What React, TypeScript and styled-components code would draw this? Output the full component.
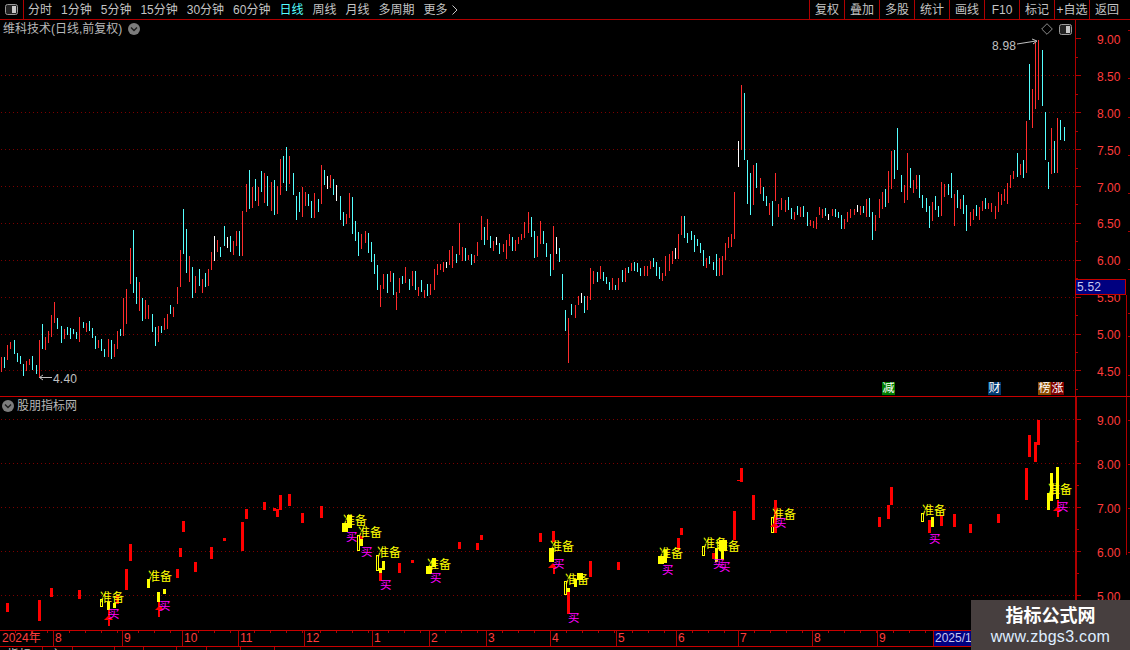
import React from "react";
import styled, { createGlobalStyle } from "styled-components";

const RED_LINE = "#b00000";
const GRID = "#7c0000";
const AXIS_TEXT = "#ff3c3c";
const FONT = `"Liberation Sans", "Noto Sans CJK SC", sans-serif`;

const Global = createGlobalStyle`
  html, body { margin: 0; padding: 0; background: #000; overflow: hidden; }
  #root { width: 1130px; height: 650px; }
`;

const Screen = styled.div`
  position: relative;
  width: 1130px;
  height: 650px;
  overflow: hidden;
  display: flex;
  flex-direction: column;
  background: #000;
  color: #c4c4c4;
  font: 12px/14px ${FONT};
`;

const Toolbar = styled.div`
  flex: none;
  height: 19px;
  display: flex;
  align-items: stretch;
  border-bottom: 1px solid ${RED_LINE};
`;

const ToggleCell = styled.div`
  width: 23px;
  display: flex;
  align-items: center;
  justify-content: center;
  border-right: 1px solid ${RED_LINE};
`;

const PeriodList = styled.div`
  display: flex;
  align-items: center;
  gap: 9px;
  padding: 1px 0 0 4px;
`;

const Period = styled.span<{ $active?: boolean }>`
  color: ${(p) => (p.$active ? "#54ffff" : "#c4c4c4")};
  white-space: nowrap;
  display: inline-flex;
  align-items: center;
  gap: 4px;
`;

const ActionList = styled.div`
  margin-left: auto;
  display: flex;
  padding-right: 6px;
`;

const Action = styled.div`
  width: 34px;
  padding-top: 1px;
  border-left: 1px solid ${RED_LINE};
  display: flex;
  align-items: center;
  justify-content: center;
  white-space: nowrap;
`;

const Pane = styled.section<{ $height: number; $ruled?: boolean }>`
  flex: none;
  position: relative;
  height: ${(p) => p.$height}px;
  display: flex;
  ${(p) => (p.$ruled ? `border-bottom: 1px solid #c80000;` : "")}
`;

const Plot = styled.svg`
  display: block;
  flex: none;
  width: 1075px;
  height: 100%;
`;

const AxisColumn = styled.svg<{ $rule: number }>`
  display: block;
  flex: 1;
  min-width: 0;
  height: 100%;
  box-sizing: border-box;
  border-left: ${(p) => p.$rule}px solid ${RED_LINE};
`;

const PaneTitle = styled.div<{ $left: number; $top: number; $gap: number }>`
  position: absolute;
  left: ${(p) => p.$left}px;
  top: ${(p) => p.$top}px;
  display: flex;
  align-items: center;
  gap: ${(p) => p.$gap}px;
  color: #b8b8b8;
  white-space: nowrap;
`;

const CornerTools = styled.div`
  position: absolute;
  left: 1041px;
  top: 3px;
  display: flex;
  align-items: center;
  gap: 6px;
`;

const PriceTag = styled.div`
  position: absolute;
  left: 1075px;
  top: 259px;
  width: 51px;
  height: 16px;
  box-sizing: border-box;
  padding-left: 1px;
  background: #000080;
  border: 1px solid #c80000;
  color: #c8c8f0;
  font-size: 12px;
  line-height: 14px;
  letter-spacing: 0.2px;
`;

const BadgeRow = styled.div`
  position: absolute;
  left: 882px;
  top: 362px;
  display: flex;
`;

const Badge = styled.span<{ $bg: string; $gap?: number }>`
  width: 13px;
  height: 13px;
  margin-left: ${(p) => p.$gap ?? 0}px;
  background: ${(p) => p.$bg};
  color: #fff;
  font-size: 12px;
  line-height: 13px;
  text-align: center;
  overflow: hidden;
`;

const TimeAxis = styled.div`
  flex: none;
  height: 15px;
  display: flex;
  border-top: 1px solid #c80000;
  border-bottom: 1px solid #c80000;
  color: ${AXIS_TEXT};
`;

const TimeCell = styled.div<{ $w: number; $first?: boolean; $cursor?: boolean }>`
  flex: none;
  width: ${(p) => p.$w}px;
  box-sizing: border-box;
  padding-left: ${(p) => (p.$first ? 2 : 1)}px;
  border-left: ${(p) => (p.$first ? "none" : `1px solid ${RED_LINE}`)};
  line-height: 15px;
  white-space: nowrap;
  background: ${(p) =>
    p.$cursor
      ? "#000080"
      : `repeating-linear-gradient(90deg, transparent 0 15px, ${RED_LINE} 15px 16px) top left / 100% 2px no-repeat`};
  color: ${(p) => (p.$cursor ? "#c8c8f0" : AXIS_TEXT)};
`;

const TabStrip = styled.div`
  flex: none;
  height: 4px;
  display: flex;
  overflow: hidden;
`;

const Tab = styled.div<{ $w: number }>`
  flex: none;
  width: ${(p) => p.$w}px;
  box-sizing: border-box;
  border-right: 1px solid ${RED_LINE};
  padding: 1px 0 0 7px;
  color: #c4c4c4;
  line-height: 14px;
`;

const Watermark = styled.div`
  position: absolute;
  left: 971px;
  top: 600px;
  width: 159px;
  height: 50px;
  background: #473f3f;
  display: flex;
  flex-direction: column;
  align-items: center;
  padding-top: 4px;
  box-sizing: border-box;
`;

const WatermarkTitle = styled.div`
  color: #fff;
  font-size: 18px;
  font-weight: 700;
  line-height: 24px;
`;

const WatermarkUrl = styled.div`
  color: #dfeeff;
  font-size: 16px;
  line-height: 18px;
  letter-spacing: 0.3px;
`;

const COLORS: Record<string, string> = { R: "#ff2c2c", C: "#54ffff", W: "#ffffff" };

type Section = { ox: number; oy: number; data: string };

const CANDLES: Section[] = [
  {
    ox: 0,
    oy: 130,
    data: "4,682,725,R 13,682,713,C 22,645,690,R 31,636,657,R 43,630,672,C 52,670,696,C 61,678,702,C 70,702,738,C 79,693,723,R 88,687,705,R 97,678,720,C 109,705,732,C 118,630,745,R 127,582,657,C 136,621,660,R 145,603,639,R 154,555,621,R 163,516,579,R 172,564,597,C 184,588,639,C 193,597,627,R 202,591,615,C 211,594,627,C 220,597,612,C 229,606,627,C 238,561,636,R 250,576,594,C 259,579,606,R 268,573,603,C 277,594,624,C 286,618,657,C 295,630,654,R 304,627,663,C 313,657,681,C 325,627,681,R 334,630,687,C 343,642,681,R 352,603,657,R 361,597,618,C 370,504,618,R 379,477,582,R 391,354,462,R 400,300,489,C 409,441,522,C 418,456,543,R 427,504,573,C 436,510,567,R 445,525,567,R 457,552,606,C 466,591,648,C 475,588,636,R 484,588,610,C 493,564,600,R 502,552,597,R 511,525,552,C 520,531,561,R 532,471,522,R 541,360,471,R 550,237,372,C 559,297,429,C 568,378,456,R 577,411,504,C 586,438,489,R 598,417,468,C 607,447,489,R 616,429,471,C 625,417,468,R 634,366,420,R 643,318,393,W 652,330,366,R 661,351,381,C 673,288,348,C 682,321,354,W 691,318,366,C 700,333,375,R 709,303,348,R 718,303,378,C 727,243,378,R 739,162,246,R 748,120,237,C 757,171,234,R 766,147,213,C 775,171,228,R 784,123,186,C 793,129,219,R 802,138,228,C 814,156,243,R 823,150,255,C 832,168,252,R 841,87,195,R 850,78,159,C 859,51,183,C 868,78,162,R 880,129,195,C 889,198,270,C 898,186,246,C",
  },
  {
    ox: 300,
    oy: 130,
    data: "7,171,261,R 16,186,228,R 25,192,228,C 34,213,264,C 43,189,264,R 55,207,246,C 64,105,222,R 73,120,165,C 82,138,177,W 91,135,174,R 100,147,195,C 109,165,213,W 121,198,270,C 130,246,288,C 139,252,282,R 148,189,264,R 157,201,312,C 166,273,333,C 175,306,378,C 184,312,357,R 196,303,339,R 205,309,369,C 214,336,396,C 223,372,432,C 232,405,480,C 241,465,531,R 250,432,477,R 262,432,489,C 271,423,456,R 280,429,495,C 289,486,540,R 298,444,489,R 307,438,462,C 316,411,459,R 328,447,480,C 337,423,468,R 346,423,480,C 355,471,498,R 364,450,486,C 373,480,504,R 382,462,498,C 391,462,495,R 403,417,480,R 412,402,435,R 421,402,420,R 430,396,426,R 439,396,414,W 448,360,405,R 457,348,414,R 469,372,399,C 478,279,375,R 487,351,393,R 496,354,393,C 505,375,390,R 514,372,405,C 523,375,399,R 532,336,378,R 544,258,330,R 553,291,345,C 562,267,330,R 571,318,354,C 580,333,363,R 589,321,345,W 598,339,372,C 610,342,366,R 619,330,387,R 628,312,348,R 637,321,363,C 646,330,363,R 655,321,342,R 664,312,330,R 673,276,324,R 685,246,309,R 694,261,321,C 703,303,384,C 712,318,381,R 721,273,342,R 730,303,342,C 739,339,381,C 751,372,438,C 760,288,420,R 769,321,372,W 778,354,396,C 787,432,510,C 796,540,603,C 805,564,699,R 814,522,555,C 826,525,564,R 835,498,525,R 844,489,519,W 853,498,549,C 862,498,540,R 871,414,510,R 880,423,462,R 892,426,456,C",
  },
  {
    ox: 600,
    oy: 70,
    data: "1,588,627,R 10,606,633,C 19,621,642,C 28,636,660,C 37,624,660,R 46,645,660,C 55,624,660,R 67,600,636,C 76,594,636,R 85,591,609,C 94,579,603,R 103,576,603,C 112,579,606,C 121,594,618,C 133,588,618,R 142,588,618,R 151,573,597,R 160,564,591,C 169,576,618,C 178,591,627,C 187,609,633,R 196,558,618,R 208,552,603,R 217,543,582,R 226,534,567,W 235,492,567,R 244,438,495,R 253,438,504,C 262,489,519,C 274,483,510,C 283,495,546,C 292,507,528,C 301,519,549,C 310,540,588,C 319,564,594,R 328,558,582,C 340,576,600,C 349,552,618,C 358,564,618,R 367,558,615,R 376,519,570,R 385,501,534,R 394,492,531,R 403,366,507,R 415,213,291,W 424,45,240,R 433,69,270,C 442,270,402,C 451,309,435,C 460,285,405,R 469,279,354,C 481,324,372,R 490,351,393,C 499,378,408,C 508,399,435,R 517,393,468,C 526,309,393,R 535,402,441,R 544,384,420,R 556,390,426,R 565,381,420,C 574,414,447,C 583,426,450,R 592,408,435,C 601,411,441,R 610,408,441,C 622,426,468,C 631,450,468,R 640,453,474,R 649,441,477,R 658,411,435,R 667,417,444,R 676,414,438,C 685,432,450,W 697,417,438,R 706,417,441,C 715,426,444,C 724,435,477,C 733,447,477,R 742,426,456,R 751,417,444,R 763,417,435,R 772,405,426,W 781,408,435,R 790,408,429,C 799,387,441,R 808,384,441,C 817,426,510,C 826,435,483,R 838,387,444,R 847,366,417,R 856,357,411,C 865,303,399,R 874,243,357,R 883,240,327,C 892,174,300,C",
  },
  {
    ox: 880,
    oy: 30,
    data: "64,435,486,C 73,465,519,R 82,369,510,R 91,414,474,C 100,450,489,R 109,435,477,R 118,435,504,C 127,495,534,C 139,504,546,C 148,528,594,C 157,516,573,R 166,498,540,C 175,528,561,C 184,456,558,R 193,462,501,R 205,462,495,C 214,429,504,C 223,492,588,R 232,480,534,C 241,507,537,R 250,495,552,C 259,525,603,C 271,546,588,R 280,537,570,R 289,525,558,C 298,531,570,R 307,513,543,R 316,504,537,C 325,519,537,R 334,519,546,R 346,528,567,R 355,486,546,R 364,492,525,R 373,477,513,R 382,459,522,R 391,435,474,R 400,423,447,R 412,369,441,C 421,402,435,R 430,390,444,C 439,273,429,R 448,102,270,C 457,177,294,R 466,36,237,R 475,30,210,R 487,60,228,C 496,246,390,C 505,396,477,C 514,294,432,R 523,333,429,C 532,264,429,R 541,270,330,C 553,291,333,C",
  },
];

/* lower pane blocks: x1,x2,y1,y2 in crop coordinates at 3x */
const RED_BLOCKS: Section[] = [
  {
    ox: 0,
    oy: 480,
    data: "18,27,369,396 114,123,360,423 150,159,324,351 234,243,330,357 375,384,267,330 387,396,192,243 528,537,267,294 537,546,204,231 546,555,123,156 582,591,246,276 630,639,201,237 669,678,174,183 723,732,126,213 735,744,87,117 789,798,66,90 819,828,84,93 828,837,87,111 837,846,45,90 864,873,42,78 903,912,99,129 960,969,78,114 348,357,345,372 324,330,390,438 474,480,360,411",
  },
  {
    ox: 340,
    oy: 490,
    data: "174,183,219,249 213,222,210,219 354,363,156,177 408,417,159,180 420,429,135,150 597,606,129,156 636,645,123,156 747,756,213,261 831,840,216,240 681,690,306,372 117,126,249,273 15,24,111,126 60,69,138,150 267,276,240,252 639,645,225,252",
  },
  {
    ox: 640,
    oy: 420,
    data: "120,129,324,345 111,120,354,390 279,288,273,360 300,309,144,186 291,300,180,183 336,345,225,300 402,411,240,340 714,723,291,321 741,750,255,297 750,759,201,255 864,873,300,339 900,909,285,318 939,948,282,321 987,996,312,339 1071,1080,282,309 1155,1164,144,240 1164,1173,45,111 1182,1191,66,126 1191,1200,0,75 1251,1257,240,291 216,225,399,417 243,252,390,420",
  },
];

const YELLOW_BLOCKS: Section[] = [
  { ox: 0, oy: 480, data: "321,330,366,390 339,348,369,384 441,450,297,324 471,480,336,366 489,498,327,342" },
  {
    ox: 340,
    oy: 490,
    data: "6,24,99,126 21,36,75,115 57,69,147,168 117,126,234,249 126,135,213,240 258,275,228,252 276,288,204,230 627,642,174,216 681,690,294,306 702,711,267,291 711,729,249,270",
  },
  {
    ox: 640,
    oy: 420,
    data: "54,72,408,432 72,81,390,428 225,234,384,426 243,252,390,420 236,260,360,393 873,882,291,321 1221,1230,219,270 1230,1239,159,243 1248,1257,141,237",
  },
];

const HOLLOW_BLOCKS: Section[] = [
  { ox: 0, oy: 480, data: "300,309,357,381" },
  { ox: 340, oy: 490, data: "51,60,135,183 108,117,195,243 672,681,273,315" },
  { ox: 640, oy: 420, data: "186,195,378,408 393,402,291,339 843,852,279,306" },
];

/* [x, top] of each signal label in screen coordinates */
const PREPARE: [number, number][] = [
  [100, 591], [148, 570], [343, 514], [358, 526], [377, 546], [427, 558], [550, 540], [565, 573],
  [659, 547], [703, 537], [716, 540], [772, 508], [922, 504], [1048, 483],
];
const BUY: [number, number][] = [
  [108, 608], [159, 600], [346, 531], [361, 546], [380, 579], [430, 572], [553, 558], [568, 612],
  [662, 564], [713, 558], [719, 561], [775, 517], [929, 533], [1057, 501],
];
const ARROWS: [number, number][] = [
  [109, 615], [160, 605], [553, 563], [775, 522], [1058, 506],
];

const parseCandles = (sections: Section[]) =>
  sections.flatMap((s) =>
    s.data.split(" ").map((item) => {
      const [x, t, b, c] = item.split(",");
      return {
        x: s.ox + Math.floor(Number(x) / 3),
        y: s.oy + Number(t) / 3,
        h: (Number(b) - Number(t)) / 3,
        fill: COLORS[c],
      };
    })
  );

const parseBlocks = (sections: Section[]) =>
  sections.flatMap((s) =>
    s.data.split(" ").map((item) => {
      const [x1, x2, y1, y2] = item.split(",").map(Number);
      return { x: s.ox + x1 / 3, w: (x2 - x1) / 3, y: s.oy + y1 / 3, h: (y2 - y1) / 3 };
    })
  );

const candles = parseCandles(CANDLES);
const redBlocks = parseBlocks(RED_BLOCKS);
const yellowBlocks = parseBlocks(YELLOW_BLOCKS);
const hollowBlocks = parseBlocks(HOLLOW_BLOCKS);

const UPPER_LABELS = ["9.00", "8.50", "8.00", "7.50", "7.00", "6.50", "6.00", "5.50", "5.00", "4.50"];
const LOWER_LABELS = ["9.00", "8.00", "7.00", "6.00", "5.00"];
const upperY = (i: number) => 38.4 + i * 36.9;
const lowerY = (i: number) => 419.3 + i * 44;

const DottedLine: React.FC<{ y: number }> = ({ y }) => (
  <line x1={1} x2={1075} y1={Math.round(y) + 0.5} y2={Math.round(y) + 0.5} stroke={GRID} strokeDasharray="1 3" />
);

const Toggle: React.FC = () => (
  <svg width="13" height="11" viewBox="0 0 13 11">
    <rect x="0.5" y="0.5" width="12" height="10" rx="2" fill="#222" stroke="#9a9a9a" />
    <rect x="7" y="2" width="4" height="7" fill="#c8c8c8" />
  </svg>
);

const Chevron: React.FC = () => (
  <svg width="12" height="12" viewBox="0 0 12 12">
    <circle cx="6" cy="6" r="6" fill="#7c7c7c" />
    <path d="M3 4.6 L6 7.6 L9 4.6" fill="none" stroke="#1c1c1c" strokeWidth="1.4" />
  </svg>
);

const Diamond: React.FC = () => (
  <svg width="12" height="12" viewBox="0 0 12 12">
    <path d="M6 0.7 L11.3 6 L6 11.3 L0.7 6 Z" fill="none" stroke="#8c8c8c" />
  </svg>
);

const PERIODS = ["分时", "1分钟", "5分钟", "15分钟", "30分钟", "60分钟", "日线", "周线", "月线", "多周期"];
const ACTIONS = ["复权", "叠加", "多股", "统计", "画线", "F10", "标记", "+自选", "返回"];
const MONTHS: [string, number][] = [
  ["8", 69], ["9", 60], ["10", 56], ["11", 66], ["12", 68], ["1", 57], ["2", 57], ["3", 64],
  ["4", 66], ["5", 60], ["6", 62], ["7", 74], ["8", 65], ["9", 56],
];
const TABS = [43, 30, 42, 29, 33, 30, 34, 34];

const App: React.FC = () => (
  <Screen>
    <Global />
    <Toolbar>
      <ToggleCell>
        <Toggle />
      </ToggleCell>
      <PeriodList>
        {PERIODS.map((p) => (
          <Period key={p} $active={p === "日线"}>
            {p}
          </Period>
        ))}
        <Period>
          更多
          <svg width="6" height="10" viewBox="0 0 6 10">
            <path d="M0.5 0.5 L5 5 L0.5 9.5" fill="none" stroke="#c4c4c4" />
          </svg>
        </Period>
      </PeriodList>
      <ActionList>
        {ACTIONS.map((a) => (
          <Action key={a}>{a}</Action>
        ))}
      </ActionList>
    </Toolbar>

    <Pane $height={376} $ruled>
      <Plot viewBox="0 20 1075 376">
        {[1, 2, 3, 4, 5, 6, 7, 8, 9].map((i) => (
          <DottedLine key={i} y={upperY(i)} />
        ))}
        <g shapeRendering="crispEdges">
          {candles.map((c, i) => (
            <rect key={i} x={c.x} y={c.y} width={1} height={c.h} fill={c.fill} />
          ))}
        </g>
        <g fill="#c0c0c0" fontFamily="Liberation Sans" fontSize="12" letterSpacing="0.2">
          <text x="992" y="50">8.98</text>
          <text x="53" y="383">4.40</text>
        </g>
        <g fill="none" stroke="#c0c0c0">
          <path d="M1017 44 L1036 41 M1032 39 L1037 41 L1033 44" />
          <path d="M40 377.5 H52 M43 375 L39.5 377.5 L43 380" />
        </g>
      </Plot>
      <AxisColumn $rule={1} viewBox="1076 20 54 376" preserveAspectRatio="xMinYMin">
        <g stroke={RED_LINE} shapeRendering="crispEdges">
          {UPPER_LABELS.map((_, i) => (
            <line key={i} x1={1076} x2={1081} y1={Math.round(upperY(i)) + 0.5} y2={Math.round(upperY(i)) + 0.5} />
          ))}
          {UPPER_LABELS.map((_, i) => (
            <line key={i} x1={1076} x2={1078} y1={Math.round(upperY(i) + 18.4) + 0.5} y2={Math.round(upperY(i) + 18.4) + 0.5} />
          ))}
          <line x1={1126.5} x2={1126.5} y1={295} y2={396} />
          {[30, 78, 117, 155, 193, 231, 269, 313, 336, 375].map((y) => (
            <line key={y} x1={1128} x2={1130} y1={y + 0.5} y2={y + 0.5} />
          ))}
        </g>
        <g fill={AXIS_TEXT} fontFamily="Liberation Sans" fontSize="12">
          {UPPER_LABELS.map((l, i) => (
            <text key={l} x={1097} y={upperY(i) + 5.5}>{l}</text>
          ))}
        </g>
      </AxisColumn>
      <PaneTitle $left={3} $top={2} $gap={6}>
        维科技术(日线,前复权)
        <Chevron />
      </PaneTitle>
      <CornerTools>
        <Diamond />
        <Toggle />
      </CornerTools>
      <PriceTag>5.52</PriceTag>
      <BadgeRow>
        <Badge $bg="#007c00">减</Badge>
        <Badge $bg="#003a70" $gap={93}>财</Badge>
        <Badge $bg="#8c4c00" $gap={37}>榜</Badge>
        <Badge $bg="#800000">涨</Badge>
      </BadgeRow>
    </Pane>

    <Pane $height={233}>
      <Plot viewBox="0 397 1075 233">
        {[0, 1, 2, 3, 4].map((i) => (
          <DottedLine key={i} y={lowerY(i)} />
        ))}
        <g shapeRendering="crispEdges">
          {redBlocks.map((b, i) => (
            <rect key={i} x={b.x} y={b.y} width={b.w} height={b.h} fill="#ff0000" />
          ))}
          {yellowBlocks.map((b, i) => (
            <rect key={i} x={b.x} y={b.y} width={b.w} height={b.h} fill="#ffff00" />
          ))}
          {hollowBlocks.map((b, i) => (
            <React.Fragment key={i}>
              <rect x={b.x} y={b.y} width={b.w} height={b.h} fill="#ffff00" />
              <rect x={b.x + 1} y={b.y + 1} width={b.w - 2} height={b.h - 2} fill="#000" />
            </React.Fragment>
          ))}
        </g>
        {ARROWS.map(([x, y]) => (
          <polygon key={x} points={`${x},${y} ${x + 4},${y + 5} ${x - 5},${y + 5}`} fill="#ff0000" />
        ))}
        <g fill="#ffff00" fontFamily="Noto Sans CJK SC" fontSize="12">
          {PREPARE.map(([x, y]) => (
            <text key={`${x}-${y}`} x={x} y={y + 11}>准备</text>
          ))}
        </g>
        <g fill="#ff00ff" fontFamily="Noto Sans CJK SC" fontSize="11.5">
          {BUY.map(([x, y]) => (
            <text key={`${x}-${y}`} x={x} y={y + 10}>买</text>
          ))}
        </g>
      </Plot>
      <AxisColumn $rule={2} viewBox="1077 397 53 233" preserveAspectRatio="xMinYMin">
        <g stroke={RED_LINE} shapeRendering="crispEdges">
          {LOWER_LABELS.map((_, i) => (
            <line key={i} x1={1077} x2={1081} y1={Math.round(lowerY(i)) + 0.5} y2={Math.round(lowerY(i)) + 0.5} />
          ))}
          {LOWER_LABELS.map((_, i) => (
            <line key={i} x1={1077} x2={1079} y1={Math.round(lowerY(i) + 22) + 0.5} y2={Math.round(lowerY(i) + 22) + 0.5} />
          ))}
          <line x1={1126.5} x2={1126.5} y1={397} y2={555} />
          {[420, 464, 508, 552].map((y) => (
            <line key={y} x1={1128} x2={1130} y1={y + 0.5} y2={y + 0.5} />
          ))}
        </g>
        <g fill={AXIS_TEXT} fontFamily="Liberation Sans" fontSize="12">
          {LOWER_LABELS.map((l, i) => (
            <text key={l} x={1097} y={lowerY(i) + 5.5}>{l}</text>
          ))}
        </g>
      </AxisColumn>
      <PaneTitle $left={2} $top={2} $gap={3}>
        <Chevron />
        <span>股朋指标网</span>
      </PaneTitle>
    </Pane>

    <TimeAxis>
      <TimeCell $w={53} $first>2024年</TimeCell>
      {MONTHS.map(([m, w], i) => (
        <TimeCell key={i} $w={w}>{m}</TimeCell>
      ))}
      <TimeCell $w={38} $cursor>2025/1</TimeCell>
    </TimeAxis>

    <TabStrip>
      {TABS.map((w, i) => (
        <Tab key={i} $w={w}>{i === 0 ? "指标" : i === 1 ? "主" : ""}</Tab>
      ))}
    </TabStrip>

    <Watermark>
      <WatermarkTitle>指标公式网</WatermarkTitle>
      <WatermarkUrl>www.zbgs3.com</WatermarkUrl>
    </Watermark>
  </Screen>
);

export default App;
